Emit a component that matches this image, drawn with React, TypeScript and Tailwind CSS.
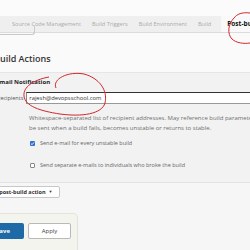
import React from "react";

const tabs = ["Source Code Management", "Build Triggers", "Build Environment", "Build"];

export default function App() {
  return (
    <div
      className="relative h-[250px] w-[250px] overflow-hidden bg-[#f6f6f6] text-[#333]"
      style={{ fontFamily: '"Open Sans", "Noto Sans", sans-serif' }}
    >
      <div className="h-4 bg-[#fbfbfb]" />
      <TabBar />
      <div className="flex h-[39px] items-end bg-[#fafafa] pb-[9px]">
        <h2 className="ml-[-6px] text-[9px] font-semibold leading-none text-[#333]">
          Build Actions
        </h2>
      </div>
      <EmailSection />
      <div className="border-t border-[#e4e4e4] bg-[#f6f6f6] pt-[3px]">
        <button className="ml-[-19px] flex h-[12px] items-center gap-[3px] rounded-[2px] border border-[#c8c8c8] bg-white pr-[6px] pl-[5px] text-[5.5px] font-bold text-[#333]">
          Add post-build action
          <span className="text-[4px]">▼</span>
        </button>
        <div className="mt-[15px] h-[40px] w-[78px] rounded-tr-[5px] border-t border-r border-[#e3e3dc] bg-[#f4f4ee] pt-[9px]">
          <div className="flex gap-[4px]">
            <button className="ml-[-20px] h-[16px] w-[44px] rounded-r-[2px] bg-[#1d6aa6] pl-[2px] text-[6px] font-bold text-white">
              Save
            </button>
            <button className="h-[16px] w-[43px] rounded-[2px] border border-[#b9b9b9] bg-white text-[6px] text-[#444]">
              Apply
            </button>
          </div>
        </div>
      </div>
      <Annotations />
    </div>
  );
}

function TabBar() {
  return (
    <div className="relative flex h-[17px] items-center gap-[11px] border-b border-[#dcdcdc] bg-[#efefef] pl-[12px] text-[5.6px] text-[#ababab]">
      {tabs.map((tab) => (
        <span key={tab} className="whitespace-nowrap">
          {tab}
        </span>
      ))}
      <span className="-ml-[1px] flex h-full items-center whitespace-nowrap bg-[#f9f9f9] pl-[6px] text-[6.5px] font-bold text-[#111]">
        Post-build Actions
      </span>
      <div className="absolute top-[10px] left-[-4px] h-[9px] w-[39px] rounded-br-[3px] border-r border-b border-[#c9c9c9]" />
    </div>
  );
}

function EmailSection() {
  return (
    <div className="h-[110px] border-t border-[#e6e6e6] bg-[#f2f2f2] pt-[6px]">
      <div className="ml-[-4px] text-[6px] font-bold leading-none text-[#222]">
        Email Notification
      </div>
      <div className="mt-[7px] flex items-center gap-[3px]">
        <span className="ml-[-3px] w-[29px] text-[5.5px] text-[#555]">Recipients</span>
        <div className="flex h-[12px] w-[240px] shrink-0 items-center border-t-[1.5px] border-b border-t-[#333] border-b-[#999] border-l border-l-[#888] bg-white pl-[2px] text-[5.8px] text-[#333]">
          rajesh@devopsschool.com
        </div>
      </div>
      <div className="mt-[9px] ml-[29px] w-[240px] text-[6px] leading-[10px] text-[#6f6f6f]">
        <div className="whitespace-nowrap">
          Whitespace-separated list of recipient addresses. May reference build parameters
        </div>
        <div className="whitespace-nowrap">
          be sent when a build fails, becomes unstable or returns to stable.
        </div>
      </div>
      <div className="mt-[6px] ml-[30px] flex flex-col gap-[14px] text-[5.5px] text-[#666]">
        <label className="flex items-center gap-[5px]">
          <span className="flex h-[5px] w-[5px] items-center justify-center rounded-[1px] bg-[#2f6fd0]">
            <svg viewBox="0 0 10 10" className="h-[5px] w-[5px]">
              <path d="M2 5.2 L4.2 7.3 L8 2.8" stroke="white" strokeWidth="1.8" fill="none" />
            </svg>
          </span>
          Send e-mail for every unstable build
        </label>
        <label className="flex items-center gap-[5px]">
          <span className="h-[5px] w-[5px] rounded-[1px] border border-[#888] bg-white" />
          Send separate e-mails to individuals who broke the build
        </label>
      </div>
    </div>
  );
}

function Annotations() {
  return (
    <svg
      className="pointer-events-none absolute inset-0"
      width="250"
      height="250"
      viewBox="0 0 250 250"
      fill="none"
      stroke="#d3262b"
      strokeWidth="1"
    >
      <path d="M56 88 C52 79 68 71 84 74 C99 78 108 90 105 103 C102 114 82 117 60 114 C40 111 25 106 24 96 C23 87 33 80 49 77" />
      <path d="M250 13 C242 12 237 14 234 18 C228 24 227 34 232 39 C236 43 244 44 250 43" />
    </svg>
  );
}
